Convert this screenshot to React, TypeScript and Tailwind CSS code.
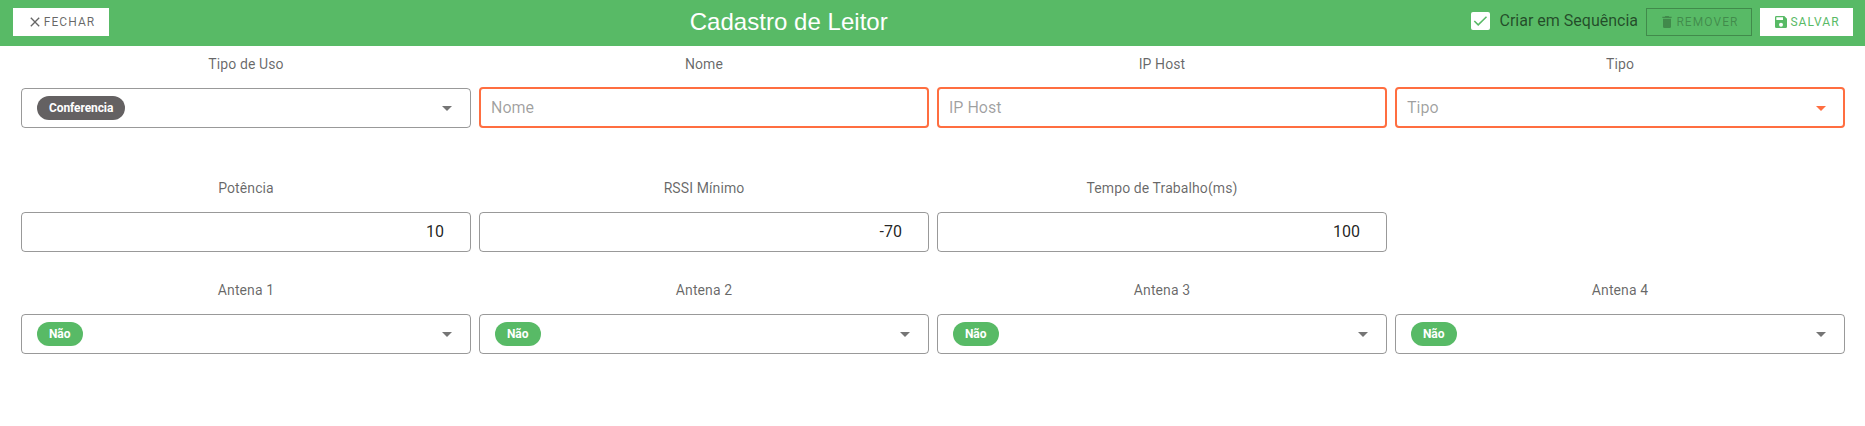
import { useState, type ReactNode } from 'react'

const ICONS = {
  close: 'M19,6.41L17.59,5L12,10.59L6.41,5L5,6.41L10.59,12L5,17.59L6.41,19L12,13.41L17.59,19L19,17.59L13.41,12L19,6.41Z',
  trash: 'M19,4H15.5L14.5,3H9.5L8.5,4H5V6H19M6,19A2,2 0 0,0 8,21H16A2,2 0 0,0 18,19V7H6V19Z',
  save: 'M15,9H5V5H15M12,19A3,3 0 0,1 9,16A3,3 0 0,1 12,13A3,3 0 0,1 15,16A3,3 0 0,1 12,19M17,3H5C3.89,3 3,3.9 3,5V19A2,2 0 0,0 5,21H19A2,2 0 0,0 21,19V7L17,3Z',
  caret: 'M7,10L12,15L17,10H7Z',
}

function Icon({ name, className }: { name: keyof typeof ICONS; className: string }) {
  return (
    <svg viewBox="0 0 24 24" fill="currentColor" aria-hidden="true" className={`shrink-0 ${className}`}>
      <path d={ICONS[name]} />
    </svg>
  )
}

function Field({ label, children }: { label: string; children: ReactNode }) {
  return (
    <div className="flex flex-col">
      <span className="h-5 text-center text-sm leading-5 tracking-[0.1px] text-black/60">{label}</span>
      <div className="mt-[13px] flex h-[41px] flex-col justify-end">{children}</div>
    </div>
  )
}

function TextField({ label }: { label: string }) {
  return (
    <Field label={label}>
      <input
        placeholder={label}
        className="h-[41px] w-full rounded border-2 border-[#ff6e40] px-2.5 text-base text-black/87 outline-none placeholder:text-black/38"
      />
    </Field>
  )
}

function NumberField({ label, value }: { label: string; value: string }) {
  return (
    <Field label={label}>
      <input
        defaultValue={value}
        className="h-10 w-full rounded border border-black/40 pr-[26px] pb-0.5 text-right text-base text-black/87 outline-none"
      />
    </Field>
  )
}

function ChipSelect({ label, value, chip }: { label: string; value: string; chip: string }) {
  return (
    <Field label={label}>
      <button type="button" className="flex h-10 items-center justify-between rounded border border-black/40 pr-[11px] pl-[15px]">
        <span
          className={`flex h-6 min-w-[46px] items-center rounded-full px-3 text-xs font-bold tracking-[-0.1px] text-white ${chip}`}
        >
          {value}
        </span>
        <Icon name="caret" className="size-6 text-black/54" />
      </button>
    </Field>
  )
}

function Header() {
  const [sequence, setSequence] = useState(true)

  return (
    <header className="flex h-[46px] items-start justify-between bg-[#58ba66] pt-2 pr-3 pl-[13px]">
      <button
        type="button"
        className="flex h-7 w-24 items-center justify-center bg-white text-xs tracking-[1.07px] text-black/60"
      >
        <Icon name="close" className="mr-px size-4" />
        FECHAR
      </button>
      <h1 className="mr-0.5 font-['Liberation_Sans',Arial,sans-serif] text-2xl leading-7 tracking-[0.03px] text-white">
        Cadastro de Leitor
      </h1>
      <div className="flex">
        <label className="mt-px mr-2 flex h-6 items-center text-base text-black/60">
          <input
            type="checkbox"
            checked={sequence}
            onChange={(e) => setSequence(e.target.checked)}
            className="peer sr-only"
          />
          <span className="mr-2.5 flex h-[18px] w-[19px] items-center justify-center rounded-xs bg-white text-[#58ba66]">
            {sequence && (
              <svg viewBox="0 0 19 18" fill="none" stroke="currentColor" strokeWidth="1.5" className="h-[18px] w-[19px]">
                <path d="M3.3 9L7.2 12.9L15.5 4.7" />
              </svg>
            )}
          </span>
          Criar em Sequência
        </label>
        <button
          type="button"
          disabled
          className="mr-2 flex h-7 w-[106px] items-center justify-center border border-black/26 text-xs tracking-[1.07px] text-black/26"
        >
          <Icon name="trash" className="mr-px size-4" />
          REMOVER
        </button>
        <button
          type="button"
          className="flex h-7 w-[93px] items-center justify-center bg-white text-xs tracking-[1.07px] text-[#58ba66]"
        >
          <Icon name="save" className="mr-px size-4" />
          SALVAR
        </button>
      </div>
    </header>
  )
}

export default function App() {
  return (
    <div className="min-h-[426px] bg-white font-[Roboto,sans-serif]">
      <Header />
      <main className="pt-2 pr-5 pl-[21px]">
        <section className="grid grid-cols-4 gap-x-2">
          <ChipSelect label="Tipo de Uso" value="Conferencia" chip="bg-[#646162]" />
          <TextField label="Nome" />
          <TextField label="IP Host" />
          <Field label="Tipo">
            <button
              type="button"
              className="flex h-[41px] items-center justify-between rounded border-2 border-[#ff6e40] pr-2.5 pl-2.5 text-base text-black/38"
            >
              <span>Tipo</span>
              <Icon name="caret" className="size-6 text-[#ff6e40]" />
            </button>
          </Field>
        </section>
        <section className="mt-[50px] grid grid-cols-4 gap-x-2">
          <NumberField label="Potência" value="10" />
          <NumberField label="RSSI Mínimo" value="-70" />
          <NumberField label="Tempo de Trabalho(ms)" value="100" />
        </section>
        <section className="mt-7 grid grid-cols-4 gap-x-2">
          <ChipSelect label="Antena 1" value="Não" chip="bg-[#58ba66]" />
          <ChipSelect label="Antena 2" value="Não" chip="bg-[#58ba66]" />
          <ChipSelect label="Antena 3" value="Não" chip="bg-[#58ba66]" />
          <ChipSelect label="Antena 4" value="Não" chip="bg-[#58ba66]" />
        </section>
      </main>
    </div>
  )
}
